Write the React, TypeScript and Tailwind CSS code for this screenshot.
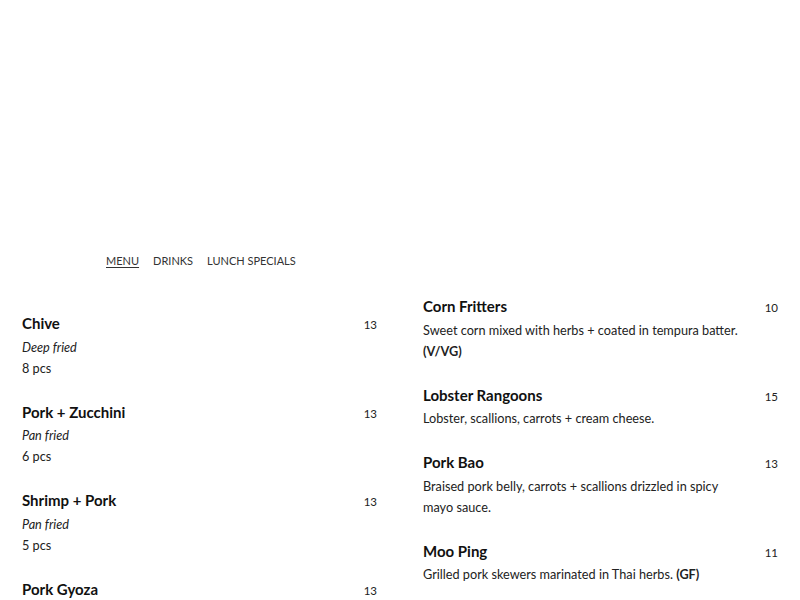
import React from "react";

type Item = { name: string; price: string; lines: React.ReactNode[]; italic?: boolean };

const left: Item[] = [
  { name: "Chive", price: "13", italic: true, lines: ["Deep fried", "8 pcs"] },
  { name: "Pork + Zucchini", price: "13", italic: true, lines: ["Pan fried", "6 pcs"] },
  { name: "Shrimp + Pork", price: "13", italic: true, lines: ["Pan fried", "5 pcs"] },
  { name: "Pork Gyoza", price: "13", italic: true, lines: [] },
];

const right: Item[] = [
  {
    name: "Corn Fritters",
    price: "10",
    lines: ["Sweet corn mixed with herbs + coated in tempura batter.", <b key="b" className="font-bold">(V/VG)</b>],
  },
  { name: "Lobster Rangoons", price: "15", lines: ["Lobster, scallions, carrots + cream cheese."] },
  {
    name: "Pork Bao",
    price: "13",
    lines: ["Braised pork belly, carrots + scallions drizzled in spicy", "mayo sauce."],
  },
  {
    name: "Moo Ping",
    price: "11",
    lines: [
      <span key="m">
        Grilled pork skewers marinated in Thai herbs. <b className="font-bold">(GF)</b>
      </span>,
    ],
  },
];

function MenuItem({ item }: { item: Item }) {
  return (
    <div className="mb-[21px]">
      <div className="flex items-center justify-between h-[24px]">
        <span className="text-[15px] font-bold text-[#111] leading-[24px]">{item.name}</span>
        <span className="text-[11.5px] text-[#222] leading-[24px] pt-[4px]">{item.price}</span>
      </div>
      {item.lines.length > 0 && (
        <div className="mt-[1.5px] text-[12.7px] leading-[21px] text-[#222]">
          {item.lines.map((l, i) => (
            <div key={i} className={item.italic && i === 0 ? "italic" : ""}>
              {l}
            </div>
          ))}
        </div>
      )}
    </div>
  );
}

export default function App() {
  return (
    <div className="w-[800px] h-[600px] overflow-hidden bg-white font-['Lato','Liberation_Sans',sans-serif]">
      <div className="h-[253px]" />
      <nav className="flex gap-[14px] pl-[106px] text-[11px] leading-[16px] text-[#333]">
        <span className="underline underline-offset-2">MENU</span>
        <span>DRINKS</span>
        <span>LUNCH SPECIALS</span>
      </nav>
      <div className="flex gap-[46px] px-[22px] mt-[25px]">
        <div className="w-[355px] pt-[17px]">
          {left.map((it) => (
            <MenuItem key={it.name} item={it} />
          ))}
        </div>
        <div className="w-[355px]">
          {right.map((it) => (
            <MenuItem key={it.name} item={it} />
          ))}
        </div>
      </div>
    </div>
  );
}
